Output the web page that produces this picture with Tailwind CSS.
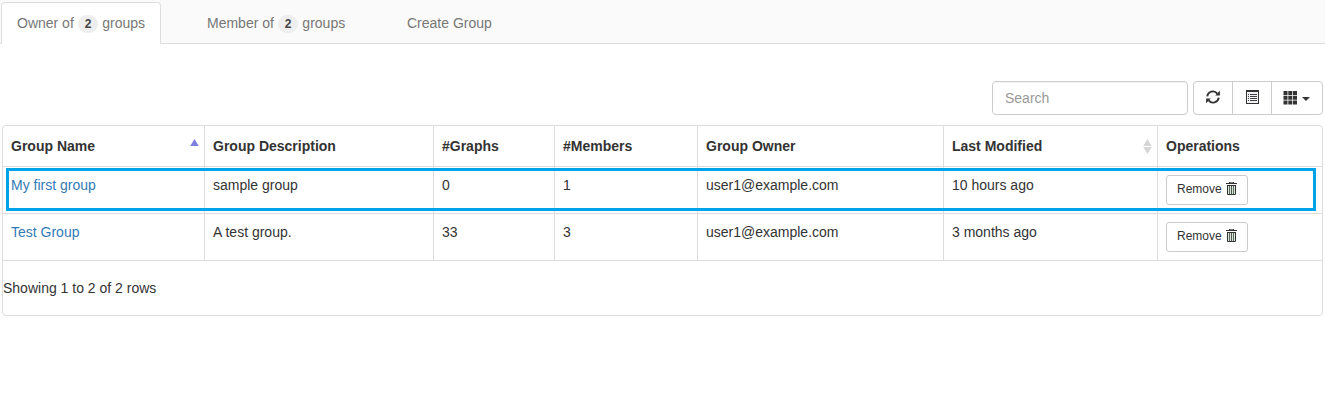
<!DOCTYPE html>
<html lang="en">
<head>
<meta charset="utf-8">
<title>Groups</title>
<script src="https://cdn.jsdelivr.net/npm/@tailwindcss/browser@4"></script>
</head>
<body class="bg-white font-['Liberation_Sans',Arial,sans-serif] text-[14px] leading-5 text-[#333] h-[419px] overflow-hidden">
<svg class="hidden">
  <symbol id="trash" viewBox="0 0 11 13">
    <path fill="#333" d="M3 0h5v1h3v1H0V1h3zM1 3h9v9q0 1-1 1H2q-1 0-1-1z"/>
    <path fill="#fff" d="M4 .6h3V1H4z"/>
    <path fill="#d5e8d8" d="M2 4h1.200v8H2zM3.900 4h1.200v8H3.900zM5.900 4h1.200v8H5.900zM7.800 4h1.200v8H7.800z"/>
  </symbol>
</svg>
<nav class="flex gap-[30px] h-11 pt-0.5 pl-px bg-[#fafafa] border-b border-[#ddd]">
  <a class="flex items-center w-[160px] h-[42px] px-[15px] bg-white border border-[#ddd] border-b-white rounded-t text-[#777] whitespace-pre">Owner of <span class="shrink-0 rounded-full bg-[#eee] text-[#444] font-bold text-[12px] leading-[18px] w-[20.660px] h-[18px] mt-0.5 text-center">2</span> groups</a>
  <a class="flex items-center w-[170px] h-[42px] px-[15px] border border-transparent text-[#777] whitespace-pre">Member of <span class="shrink-0 rounded-full bg-[#eee] text-[#444] font-bold text-[12px] leading-[18px] w-[20.660px] h-[18px] mt-0.5 text-center">2</span> groups</a>
  <a class="flex items-center h-[42px] px-[15px] border border-transparent text-[#777]">Create Group</a>
</nav>
<main class="pt-[37px] pl-0.5 pr-0.5">
  <div class="flex justify-end gap-[5px] h-[34px]">
    <input placeholder="Search" class="w-[196px] h-[34px] px-3 border border-[#ccc] rounded placeholder:text-[#999] outline-none shadow-[inset_0_1px_1px_rgba(0,0,0,.05)]">
    <div class="flex w-[130px] border border-[#ccc] rounded divide-x divide-[#ccc]">
      <button class="w-[39px] pb-0.5 flex items-center justify-center"><svg width="14" height="14" viewBox="0 0 14 14" fill="none" stroke="#333" stroke-width="1.900"><path d="M1.300 6.300A5.600 5.600 0 0 1 11.300 3.600M12.700 7.700A5.600 5.600 0 0 1 2.700 10.400"/><path fill="#333" stroke="none" d="M13.900 .8V5.500H9.200zM.1 13.200V8.500h4.700z"/></svg></button>
      <button class="w-[39px] pb-0.5 pl-[13px] flex items-center"><svg width="13" height="14" viewBox="0 0 13 14"><path fill="#333" d="M0 0h13v14H0z"/><path fill="#f0f0f4" d="M1 2h11v11H1z"/><path fill="#444" d="M2 4h1v1H2zM2 6h1v1H2zM2 8h1v1H2zM2 10h1v1H2zM4 4h7v1H4zM4 6h7v1H4zM4 8h7v1H4zM4 10h7v1H4z"/></svg></button>
      <button class="w-[50px] pb-px pr-px flex items-center justify-center gap-[5px]"><svg width="14" height="14" viewBox="0 0 14 14" fill="#333"><path d="M.5 0h4v4h-4zM5.300 0h4v4h-4zM10 0h4v4h-4zM.5 4.700h4v4h-4zM5.300 4.700h4v4h-4zM10 4.700h4v4h-4zM.5 9.500h4v4h-4zM5.300 9.500h4v4h-4zM10 9.500h4v4h-4z"/></svg><svg class="mt-0.5" width="8" height="4" viewBox="0 0 8 4"><path fill="#333" d="M0 0h8L4 4z"/></svg></button>
    </div>
  </div>
  <section class="relative mt-2.5 h-[191px] border border-[#ddd] rounded">
    <div class="grid grid-cols-[202px_229px_121px_143px_246px_214px_164px] font-bold h-[41px] border-b border-[#ddd] *:border-r *:border-[#ddd] *:p-2 *:pt-[10px] *:last:border-r-0">
      <div class="flex justify-between">Group Name<svg class="mt-[3px] -mr-[3px]" width="9" height="7" viewBox="0 0 9 7"><path fill="#7b80de" d="M4.500 0L8.800 7H.2z"/></svg></div>
      <div>Group Description</div><div>#Graphs</div><div>#Members</div><div>Group Owner</div>
      <div class="flex justify-between">Last Modified<svg class="mt-[3px] -mr-[3px]" width="9" height="15" viewBox="0 0 9 15"><path fill="#d6d6d6" d="M4.500 0L8.800 7H.2zM.2 8h8.600L4.500 15z"/></svg></div>
      <div>Operations</div>
    </div>
    <div class="grid grid-cols-[202px_229px_121px_143px_246px_214px_164px] h-[47px] border-b border-[#ddd] *:border-r *:border-[#ddd] *:p-2 *:last:border-r-0">
      <div class="text-[#337ab7]">My first group</div><div>sample group</div><div>0</div><div>1</div><div>user1@example.com</div><div>10 hours ago</div>
      <div><button class="flex w-[82px] h-[30px] pl-2.5 pt-1 border border-[#ccc] rounded-[3px] text-[12px] leading-[18px]"><span class="w-[49px] text-left">Remove</span><svg class="mt-0.5" width="11" height="13"><use href="#trash"/></svg></button></div>
    </div>
    <div class="grid grid-cols-[202px_229px_121px_143px_246px_214px_164px] h-[47px] border-b border-[#ddd] *:border-r *:border-[#ddd] *:p-2 *:last:border-r-0">
      <div class="text-[#337ab7]">Test Group</div><div>A test group.</div><div>33</div><div>3</div><div>user1@example.com</div><div>3 months ago</div>
      <div><button class="flex w-[82px] h-[30px] pl-2.5 pt-1 border border-[#ccc] rounded-[3px] text-[12px] leading-[18px]"><span class="w-[49px] text-left">Remove</span><svg class="mt-0.5" width="11" height="13"><use href="#trash"/></svg></button></div>
    </div>
    <p class="pt-[17px]">Showing 1 to 2 of 2 rows</p>
    <div class="absolute left-[3px] top-[42px] w-[1310px] h-[43px] border-[3px] border-[#00a2e8] pointer-events-none"></div>
  </section>
</main>
</body>
</html>
